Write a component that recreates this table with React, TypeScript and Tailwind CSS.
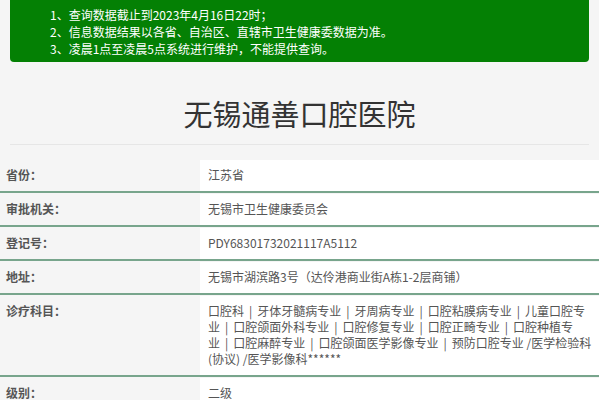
const font = { fontFamily: '"Noto Sans CJK SC", "Liberation Sans", sans-serif' }

const rows: { label: string; value: string[] }[] = [
  { label: "省份：", value: ["江苏省"] },
  { label: "审批机关：", value: ["无锡市卫生健康委员会"] },
  { label: "登记号：", value: ["PDY68301732021117A5112"] },
  { label: "地址：", value: ["无锡市湖滨路3号（达伶港商业街A栋1-2层商铺）"] },
  {
    label: "诊疗科目：",
    value: [
      "口腔科 | 牙体牙髓病专业 | 牙周病专业 | 口腔粘膜病专业 | 儿童口腔专",
      "业 | 口腔颌面外科专业 | 口腔修复专业 | 口腔正畸专业 | 口腔种植专",
      "业 | 口腔麻醉专业 | 口腔颌面医学影像专业 | 预防口腔专业 /医学检验科",
      "(协议) /医学影像科******",
    ],
  },
  { label: "级别：", value: ["二级"] },
]

function Line({ text }: { text: string }) {
  // separators get extra breathing room like the original page
  const parts = text.split(" | ")
  return (
    <div className="whitespace-nowrap">
      {parts.map((p, i) => (
        <span key={i}>
          {i > 0 && <span className="px-[5px]">|</span>}
          {p}
        </span>
      ))}
    </div>
  )
}

export default function App() {
  return (
    <div className="w-[599px] h-[400px] overflow-hidden bg-[#f5f5f5]" style={font}>
      {/* notice banner */}
      <div className="mx-[10px] h-[62px] bg-[#048004] rounded-b-[4px] pt-[6px] pl-[40px] text-[12px] leading-[17px] text-white">
        <p>1、查询数据截止到2023年4月16日22时；</p>
        <p>2、信息数据结果以各省、自治区、直辖市卫生健康委数据为准。</p>
        <p>3、凌晨1点至凌晨5点系统进行维护，不能提供查询。</p>
      </div>

      {/* title */}
      <div className="mx-[10px] mt-[36px] pb-[16px] border-b border-[#e6e6e6] text-center">
        <h1 className="text-[29px] leading-[30px] text-[#333]">无锡通善口腔医院</h1>
      </div>

      {/* detail table */}
      <div className="mt-[14px]">
        {rows.map((r) => (
          <div key={r.label} className="flex border-b-2 border-[#78a58c]">
            <div className="w-[200px] shrink-0 px-[6px] py-[8px] text-[12px] leading-[16px] font-bold text-[#555]">
              {r.label}
            </div>
            <div className="flex-1 mt-[1px] bg-white px-[8px] pt-[7px] pb-[8px] text-[12px] leading-[16px] text-[#555]">
              {r.value.map((v, i) => (
                <Line key={i} text={v} />
              ))}
            </div>
          </div>
        ))}
      </div>
    </div>
  )
}
